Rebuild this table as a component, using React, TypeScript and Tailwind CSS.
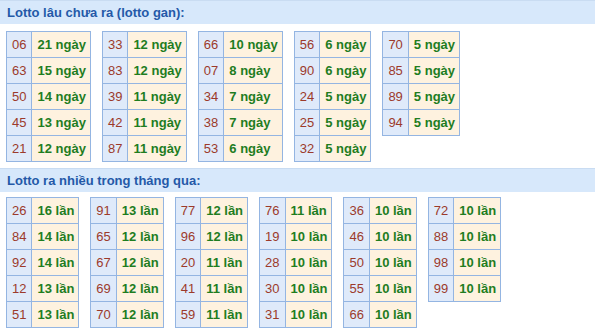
const gan: [string, string][][] = [
  [["06", "21"], ["63", "15"], ["50", "14"], ["45", "13"], ["21", "12"]],
  [["33", "12"], ["83", "12"], ["39", "11"], ["42", "11"], ["87", "11"]],
  [["66", "10"], ["07", "8"], ["34", "7"], ["38", "7"], ["53", "6"]],
  [["56", "6"], ["90", "6"], ["24", "5"], ["25", "5"], ["32", "5"]],
  [["70", "5"], ["85", "5"], ["89", "5"], ["94", "5"]],
];

const nhieu: [string, string][][] = [
  [["26", "16"], ["84", "14"], ["92", "14"], ["12", "13"], ["51", "13"]],
  [["91", "13"], ["65", "12"], ["67", "12"], ["69", "12"], ["70", "12"]],
  [["77", "12"], ["96", "12"], ["20", "11"], ["41", "11"], ["59", "11"]],
  [["76", "11"], ["19", "10"], ["28", "10"], ["30", "10"], ["31", "10"]],
  [["36", "10"], ["46", "10"], ["50", "10"], ["55", "10"], ["66", "10"]],
  [["72", "10"], ["88", "10"], ["98", "10"], ["99", "10"]],
];

function Header({ title }: { title: string }) {
  return (
    <div className="h-[24px] bg-[#d7e8fb] border-t border-[#c9dcf2] px-[7px] flex items-center text-[13px] font-bold text-[#2459a8]">
      {title}
    </div>
  );
}

function StatTable({ rows, unit }: { rows: [string, string][]; unit: string }) {
  return (
    <div className="grid grid-cols-[auto_auto] border-l border-t border-[#94b5e2]">
      {rows.map(([num, count]) => (
        <div key={num} className="contents">
          <div className="h-[26px] px-[5px] flex items-center justify-center border-r border-b border-[#94b5e2] bg-[#dfeafa] text-[#9c3a2b]">
            {num}
          </div>
          <div className="h-[26px] pl-[5px] pr-[4px] flex items-center border-r border-b border-[#94b5e2] bg-[#fef2df] font-bold text-[#1f7d1f]">
            {count} {unit}
          </div>
        </div>
      ))}
    </div>
  );
}

export default function App() {
  return (
    <div className="w-[595px] h-[330px] bg-white overflow-hidden text-[13px] font-['Liberation_Sans',Arial,sans-serif]">
      <Header title="Lotto lâu chưa ra (lotto gan):" />
      <div className="flex items-start gap-[11px] px-[6px] pt-[7px] pb-[6px]">
        {gan.map((t, i) => (
          <StatTable key={i} rows={t} unit="ngày" />
        ))}
      </div>
      <Header title="Lotto ra nhiều trong tháng qua:" />
      <div className="flex items-start gap-[11px] px-[6px] pt-[5px]">
        {nhieu.map((t, i) => (
          <StatTable key={i} rows={t} unit="lần" />
        ))}
      </div>
    </div>
  );
}
